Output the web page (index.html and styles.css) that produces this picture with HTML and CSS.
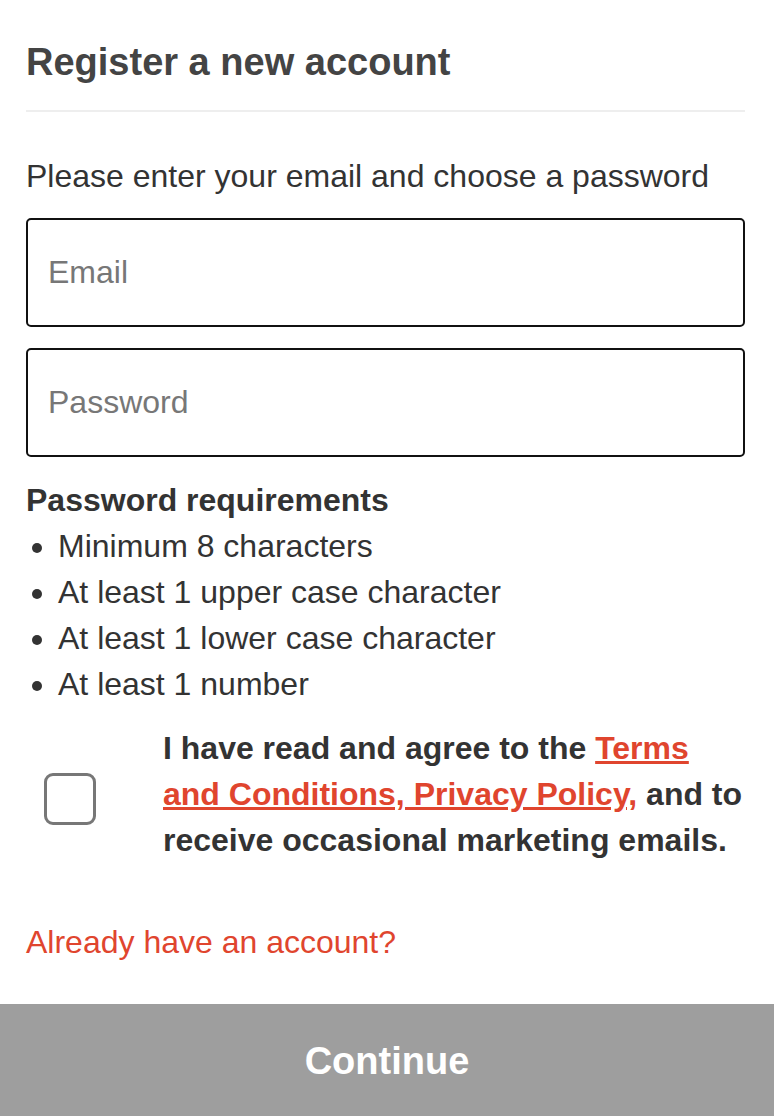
FILE: index.html
```html
<!DOCTYPE html>
<html lang="en">
<head>
  <meta charset="UTF-8" />
  <meta name="viewport" content="width=device-width, initial-scale=1" />
  <title>Register</title>
  <link rel="stylesheet" href="styles.css">
</head>
<body>

  <div class="register-box">
    <h2 class="title">Register a new account</h2>

    <p class="intro">Please enter your email and choose a password</p>

    <!-- Register Form -->
    <form id="registerForm">
      <input type="email" id="registerEmail" placeholder="Email" />
      <input type="password" id="registerPassword" placeholder="Password" />

      <div class="requirements">
        <h3>Password requirements</h3>
        <ul>
          <li>Minimum 8 characters</li>
          <li>At least 1 upper case character</li>
          <li>At least 1 lower case character</li>
          <li>At least 1 number</li>
        </ul>
      </div>

      <label class="agree">
        <span class="check-col"><input type="checkbox" id="agreeBox" /><span class="box"></span></span>
        <span class="agree-text">I have read and agree to the <a href="#">Terms and Conditions, Privacy Policy,</a> and to receive occasional marketing emails.</span>
      </label>

      <a class="login-link" href="#">Already have an account?</a>
    </form>
  </div>

  <button type="submit" form="registerForm" class="continue">Continue</button>

</body>
</html>
```
FILE: styles.css
```css
    body {
      font-family: "Liberation Sans", Arial, sans-serif;
      background: #ffffff;
      margin: 0;
      color: #333333;
    }

    .register-box {
      padding: 0 29px 0 26px;
    }

    .title {
      margin: 0;
      padding: 40px 0 26px;
      font-size: 38px;
      line-height: 44px;
      color: #444444;
      border-bottom: 2px solid #eeeeee;
    }

    .intro {
      margin: 0;
      padding: 44px 0 22px;
      font-size: 32px;
      line-height: 40px;
    }

    #registerForm input[type="email"],
    #registerForm input[type="password"] {
      display: block;
      box-sizing: border-box;
      width: 100%;
      height: 109px;
      margin: 0 0 21px;
      padding: 0 20px;
      border: 2px solid #111111;
      border-radius: 5px;
      font-family: inherit;
      font-size: 32px;
      color: #333333;
      outline: none;
    }

    #registerForm input::placeholder {
      color: #777777;
    }

    .requirements h3 {
      margin: -1px 0 0;
      font-size: 32px;
      line-height: 46px;
    }

    .requirements ul {
      margin: 0;
      padding-left: 32px;
      font-size: 32px;
      line-height: 46px;
    }

    .agree {
      display: flex;
      align-items: center;
      margin-top: 18px;
      cursor: pointer;
    }

    .check-col {
      width: 137px;
      flex-shrink: 0;
      padding: 10px 0 0 18px;
      box-sizing: border-box;
    }

    .check-col input {
      display: none;
    }

    .box {
      display: block;
      width: 52px;
      height: 52px;
      box-sizing: border-box;
      border: 3px solid #777777;
      border-radius: 9px;
    }

    .agree-text {
      font-size: 32px;
      line-height: 46px;
      font-weight: bold;
      color: #333333;
    }

    .agree-text a {
      color: #e0452e;
      text-decoration: underline;
    }

    .login-link {
      display: block;
      margin: 59px 0 42px;
      font-size: 32px;
      line-height: 40px;
      color: #e0452e;
      text-decoration: none;
    }

    .continue {
      display: block;
      width: 100%;
      height: 112px;
      margin: 0;
      padding-top: 4px;
      border: none;
      background: #9e9e9e;
      color: #ffffff;
      font-family: inherit;
      font-size: 38px;
      font-weight: bold;
      cursor: pointer;
    }
```
